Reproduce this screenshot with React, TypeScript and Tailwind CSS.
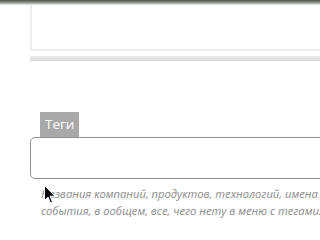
export default function App() {
  return (
    <div className="relative h-[240px] w-[320px] overflow-hidden bg-white font-['Open_Sans',sans-serif]">
      <div className="h-[5px] bg-gradient-to-b from-[#4b5249] via-[#8d9589] to-[#eef1ec]" />
      <div className="pl-[30px]">
        <div className="h-[46px] w-[320px] border-b-2 border-l-2 border-[#eeeeee]" />
        <div className="mt-[5px] h-[5px] w-[300px] bg-gradient-to-b from-[#ececec] to-[#d9d9d9]" />
        <div className="pl-[10px] pt-[50px]">
          <span className="inline-block h-[25px] bg-[#a9a9a9] px-[5px] text-[13.5px] leading-[25px] text-white">
            Теги
          </span>
        </div>
        <div className="h-[42px] w-[320px] rounded-[5px] border border-[#8b929b] bg-white" />
        <p className="mt-[6px] pl-[11px] text-[11.2px] italic leading-[17px] whitespace-nowrap text-[#8a8a8a]">
          Названия компаний, продуктов, технологий, имена
          <br />
          события, в ообщем, все, чего нету в меню с тегами.
        </p>
      </div>
      <svg
        className="absolute left-[44px] top-[185px]"
        width="12"
        height="19"
        viewBox="0 0 12 19"
      >
        <path
          d="M0.5 0.5 L0.5 15.5 L4 12 L6.5 18 L8.5 17 L6 11.2 L11 11.2 Z"
          fill="#000"
          stroke="#fff"
          strokeWidth="1"
        />
      </svg>
    </div>
  );
}
